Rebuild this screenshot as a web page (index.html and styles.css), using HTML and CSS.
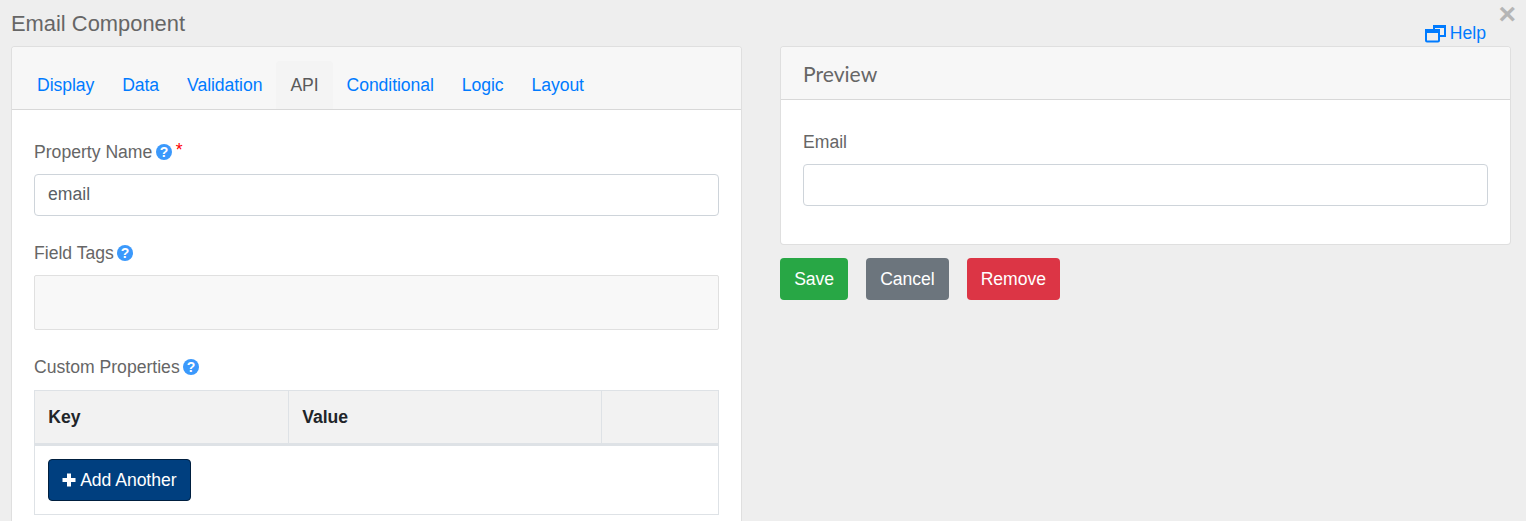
FILE: index.html
```html
<!DOCTYPE html>
<html lang="en">
<head>
<meta charset="utf-8">
<title>Email Component</title>
<link rel="stylesheet" href="styles.css">
</head>
<body>
<div class="close">&times;</div>
<header class="top">
  <h1 class="title">Email Component</h1>
  <a class="help" href="#">
    <svg class="help-icon" viewBox="0 0 21 19" width="21" height="19"><path fill="none" stroke="#007bff" stroke-width="2" d="M9 5V2h11v10h-5"/><path d="M8 1h13v3H8z" fill="#007bff"/><rect x="1" y="6" width="13" height="11.500" rx="1" fill="none" stroke="#007bff" stroke-width="2"/><path d="M0 5h15v4H0z" fill="#007bff"/></svg>
    Help
  </a>
</header>
<main class="columns">
  <section class="card">
    <nav class="card-header tabs">
      <a class="tab" href="#">Display</a>
      <a class="tab" href="#">Data</a>
      <a class="tab" href="#">Validation</a>
      <a class="tab active" href="#">API</a>
      <a class="tab" href="#">Conditional</a>
      <a class="tab" href="#">Logic</a>
      <a class="tab" href="#">Layout</a>
    </nav>
    <div class="card-body">
      <div class="group">
        <label class="label">Property Name <svg class="q" viewBox="0 0 16 16" width="16" height="16"><circle cx="8" cy="8" r="8" fill="#3b99fc"/><text x="8" y="13" class="q-mark">?</text></svg><span class="req">*</span></label>
        <div class="input">email</div>
      </div>
      <div class="group">
        <label class="label">Field Tags <svg class="q" viewBox="0 0 16 16" width="16" height="16"><circle cx="8" cy="8" r="8" fill="#3b99fc"/><text x="8" y="13" class="q-mark">?</text></svg></label>
        <div class="tags"></div>
      </div>
      <div class="group">
        <label class="label">Custom Properties <svg class="q" viewBox="0 0 16 16" width="16" height="16"><circle cx="8" cy="8" r="8" fill="#3b99fc"/><text x="8" y="13" class="q-mark">?</text></svg></label>
        <table class="table">
          <thead>
            <tr><th class="col-key">Key</th><th class="col-value">Value</th><th></th></tr>
          </thead>
          <tbody>
            <tr><td colspan="3"><button class="btn btn-add"><svg class="plus" viewBox="0 0 14 14" width="14" height="14"><path d="M5 0.5h4v4.500h4.500v4H9v4.500H5V9H0.500V5H5z" fill="#fff"/></svg> Add Another</button></td></tr>
          </tbody>
        </table>
      </div>
    </div>
  </section>
  <section class="side">
    <div class="card">
      <div class="card-header preview-head">Preview</div>
      <div class="card-body preview-body">
        <div class="group">
          <label class="label">Email</label>
          <div class="input"></div>
        </div>
      </div>
    </div>
    <div class="actions">
      <button class="btn btn-save">Save</button>
      <button class="btn btn-cancel">Cancel</button>
      <button class="btn btn-remove">Remove</button>
    </div>
  </section>
</main>
</body>
</html>
```
FILE: styles.css
```css
* { box-sizing: border-box; }
html, body { height: 100%; }
body {
  margin: 0;
  padding: 0 15px 0 11px;
  background: #eeeeee;
  color: #666666;
  font-family: "Liberation Sans", Arial, sans-serif;
  font-size: 17.6px;
  line-height: 1.5;
  overflow: hidden;
  position: relative;
}
.close {
  position: absolute;
  top: -1px;
  right: 10px;
  font-size: 30px;
  font-weight: 700;
  line-height: 1;
  color: #b5b5b5;
}
.top {
  display: flex;
  justify-content: space-between;
  align-items: flex-start;
  height: 46px;
}
.title {
  margin: 9px 0 0;
  font-size: 21.9px;
  font-weight: 400;
  line-height: 30px;
  color: #666666;
}
.help {
  margin: 20px 25px 0 0;
  color: #007bff;
  text-decoration: none;
  display: flex;
  align-items: center;
  gap: 4px;
  line-height: 26px;
}
.columns {
  display: grid;
  grid-template-columns: 731px 731px;
  column-gap: 38px;
  align-items: start;
}
.card {
  background: #fff;
  border: 1px solid rgba(0,0,0,.125);
  border-radius: 4px;
}
.card-header {
  background: #f7f7f7;
  border-bottom: 1px solid rgba(0,0,0,.125);
  border-radius: 3px 3px 0 0;
}
.tabs {
  display: flex;
  padding: 14px 11px 0;
  height: 63px;
}
.tab {
  padding: 11px 14px;
  height: 48px;
  line-height: 26px;
  color: #007bff;
  text-decoration: none;
  letter-spacing: -.07px;
  border-radius: 4px 4px 0 0;
}
.tab.active { color: #5a5a5a; background: #f4f4f4; }
.card-body { padding: 29px 22px 22px; }
.group { margin-bottom: 24px; }
.label {
  display: block;
  margin-bottom: 7.6px;
  line-height: 27.6px;
}
.q { vertical-align: -2px; margin-left: -1.5px; }
.q-mark {
  fill: #fff;
  font-family: "Liberation Sans", Arial, sans-serif;
  font-size: 14px;
  font-weight: 700;
  text-anchor: middle;
}
.req { color: #ff0000; margin-left: 4px; line-height: 0; vertical-align: 2px; }
.input {
  height: 42px;
  padding: 6px 13px;
  background: #fff;
  border: 1px solid #ced4da;
  border-radius: 4px;
  color: #5a5f66;
  line-height: 26.4px;
}
.tags {
  height: 55px;
  background: #f8f8f8;
  border: 1px solid #e0e0e0;
  border-radius: 2px;
}
.table {
  width: 100%;
  border-collapse: collapse;
  table-layout: fixed;
  color: #212529;
}
.table th, .table td {
  border: 1px solid #dee2e6;
  padding: 13.2px;
  text-align: left;
  line-height: 26.4px;
}
.table thead th {
  background: #f2f2f2;
  border-bottom-width: 3px;
  font-weight: 700;
}
.table td { padding-top: 12.7px; }
.col-key { width: 254px; }
.col-value { width: 313px; }
.btn {
  display: inline-flex;
  align-items: center;
  height: 42px;
  padding: 0 13.2px;
  border: 1px solid transparent;
  border-radius: 4px;
  color: #fff;
  font: inherit;
  letter-spacing: -.05px;
}
.btn-add {
  background: #003f7f;
  border-color: #001f3f;
  gap: 4px;
  padding: 0 14px 0 13px;
  vertical-align: top;
}
.actions { display: flex; gap: 17.7px; margin-top: 13px; }
.btn-save { background: #28a745; }
.btn-cancel { background: #6c757d; }
.btn-remove { background: #dc3545; }
.preview-head {
  height: 53px;
  padding: 14px 22px;
  font-family: Lato, sans-serif;
  font-size: 21.12px;
  line-height: 26px;
}
.preview-body { padding-bottom: 14px; }
```
